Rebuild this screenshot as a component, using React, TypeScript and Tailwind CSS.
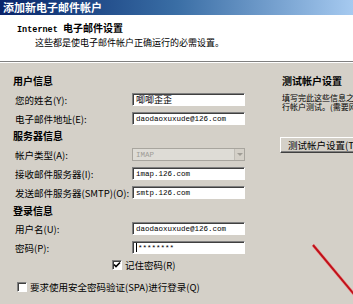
import { ReactNode } from 'react';

function Field({ children, mono = true }: { children: ReactNode; mono?: boolean }) {
  return (
    <div
      className={
        'w-[113px] h-[13px] bg-white border border-t-[#808080] border-l-[#808080] border-b-white border-r-white shadow-[inset_1px_1px_0_#404040] flex items-center pl-[3px] text-black whitespace-nowrap overflow-hidden ' +
        (mono ? "font-['Liberation_Mono',monospace] text-[7.5px]" : 'text-[9px]')
      }
    >
      {children}
    </div>
  );
}

function Row({ label, children }: { label: string; children: ReactNode }) {
  return (
    <div className="flex items-center h-[13px] mt-[6px]">
      <span className="w-[119px] pl-[2px] whitespace-nowrap text-[9.5px]">{label}</span>
      {children}
    </div>
  );
}

function CheckBox({ checked }: { checked?: boolean }) {
  return (
    <div className="w-[10px] h-[10px] bg-white border border-t-[#808080] border-l-[#808080] border-b-white border-r-white shadow-[inset_1px_1px_0_#404040] flex items-center justify-center shrink-0">
      {checked && (
        <svg width="8" height="8" viewBox="0 0 8 8">
          <path d="M1 3.5 L3 5.5 L7 1.5" stroke="#000" strokeWidth="1.6" fill="none" />
        </svg>
      )}
    </div>
  );
}

export default function App() {
  return (
    <div className="relative w-[353px] h-[304px] overflow-hidden bg-[#d4d0c8] text-[10px] leading-[12px] text-black font-['Noto_Sans_CJK_SC','Liberation_Sans',sans-serif]">
      {/* 标题栏 */}
      <div className="h-[15px] bg-linear-to-r from-[#0a246a] via-[#3a6ea5] to-[#a6caf0] flex items-center pl-[3px]">
        <span className="text-white font-bold text-[11px] leading-[13px]">添加新电子邮件帐户</span>
      </div>

      {/* 头部 */}
      <div className="h-[47px] bg-white border-b border-[#808080] pl-[17px] pt-[7px]">
        <div className="font-bold whitespace-nowrap">
          <span className="font-['Liberation_Mono',monospace] text-[8.5px]">Internet </span>
          电子邮件设置
        </div>
        <div className="pl-[18px] mt-[1px] text-[9px] whitespace-nowrap">这些都是使电子邮件帐户正确运行的必需设置。</div>
      </div>
      <div className="h-px bg-white" />

      <div className="flex">
        {/* 左侧表单 */}
        <div className="w-[250px] pl-[13px] shrink-0">
          <div className="mt-[12px] h-[12px] font-bold">用户信息</div>
          <Row label="您的姓名(Y):">
            <Field mono={false}>唧唧歪歪</Field>
          </Row>
          <Row label="电子邮件地址(E):">
            <Field>daodaoxuxude@126.com</Field>
          </Row>

          <div className="mt-[5px] h-[12px] font-bold">服务器信息</div>
          <Row label="帐户类型(A):">
            <div className="w-[113px] h-[13px] bg-[#dedcd6] border border-[#a8a59e] flex items-center justify-between pl-[3px]">
              <span className="font-['Liberation_Mono',monospace] text-[7.5px] text-[#a09d96]">IMAP</span>
              <div className="w-[10px] h-[11px] bg-[#d4d0c8] border-l border-[#c0bdb6] flex items-center justify-center">
                <svg width="6" height="4" viewBox="0 0 6 4">
                  <path d="M0 0 H6 L3 3 Z" fill="#a09d96" />
                </svg>
              </div>
            </div>
          </Row>
          <Row label="接收邮件服务器(I):">
            <Field>imap.126.com</Field>
          </Row>
          <Row label="发送邮件服务器(SMTP)(O):">
            <Field>smtp.126.com</Field>
          </Row>

          <div className="mt-[6px] h-[12px] font-bold">登录信息</div>
          <div className="flex items-center h-[13px] mt-[5px]">
            <span className="w-[119px] pl-[2px] text-[9.5px]">用户名(U):</span>
            <Field>daodaoxuxude@126.com</Field>
          </div>
          <Row label="密码(P):">
            <Field>
              <span className="w-px h-[9px] bg-black mr-px" />
              ********
            </Field>
          </Row>

          <div className="flex items-center gap-[3px] h-[12px] mt-[5px] ml-[99px]">
            <CheckBox checked />
            <span className="whitespace-nowrap text-[9.5px]">记住密码(R)</span>
          </div>
          <div className="flex items-center gap-[3px] h-[12px] mt-[10px] ml-[4px]">
            <CheckBox />
            <span className="whitespace-nowrap text-[9.5px]">要求使用安全密码验证(SPA)进行登录(Q)</span>
          </div>
        </div>

        {/* 右侧测试 */}
        <div className="flex-1 pl-[32px] overflow-hidden">
          <div className="mt-[12px] h-[12px] font-bold whitespace-nowrap">测试帐户设置</div>
          <div className="mt-[6px] text-[8px] leading-[9px] whitespace-nowrap">
            <div>填写完此这些信息之后，建议您单击下面的按钮进</div>
            <div>行帐户测试。(需要网络连接)</div>
          </div>
          <div className="mt-[26px] -ml-[2px] h-[16px] w-[100px] bg-[#d4d0c8] border border-t-white border-l-white border-b-[#404040] border-r-[#404040] shadow-[inset_-1px_-1px_0_#808080] flex items-center pl-[7px] whitespace-nowrap text-[9.5px]">
            测试帐户设置(T)
          </div>
        </div>
      </div>

      {/* 红色标注线 */}
      <svg className="absolute inset-0 pointer-events-none" width="353" height="304">
        <line x1="313" y1="245" x2="358" y2="299" stroke="#e89a94" strokeWidth="3.2" />
        <line x1="313" y1="245" x2="358" y2="299" stroke="#c0101a" strokeWidth="2" />
      </svg>
    </div>
  );
}
